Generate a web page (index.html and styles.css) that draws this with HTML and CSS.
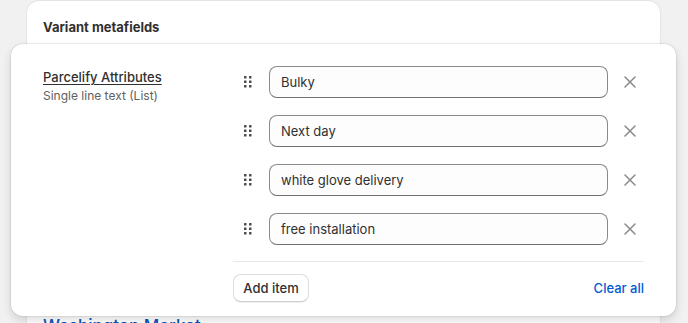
FILE: index.html
```html
<!DOCTYPE html>
<html lang="en">
<head>
  <meta charset="UTF-8">
  <title>Variant metafields</title>
  <link rel="stylesheet" href="styles.css">
</head>
<body>
  <div class="card">
    <h2 class="card-title">Variant metafields</h2>
    <div class="card-body">
      <h3 class="product-name">Washington Market</h3>
    </div>
  </div>

  <div class="popover">
    <div class="field">
      <div class="field-label">
        <a class="field-name">Parcelify Attributes</a>
        <span class="field-type">Single line text (List)</span>
      </div>
      <div class="field-list">
        <div class="item">
          <span class="handle">
            <svg width="8" height="12" viewBox="0 0 8 12"><g fill="#4a4a4a"><rect x="0" y="0" width="2.5" height="2.5" rx=".5"/><rect x="5" y="0" width="2.5" height="2.5" rx=".5"/><rect x="0" y="4.5" width="2.5" height="2.5" rx=".5"/><rect x="5" y="4.5" width="2.5" height="2.5" rx=".5"/><rect x="0" y="9" width="2.5" height="2.5" rx=".5"/><rect x="5" y="9" width="2.5" height="2.5" rx=".5"/></g></svg>
          </span>
          <input class="text-input" type="text" value="Bulky">
          <button class="remove" type="button"><svg width="12" height="12" viewBox="0 0 12 12"><path d="M1 1L11 11M11 1L1 11" stroke="#8a8a8a" stroke-width="1.5" stroke-linecap="round"/></svg></button>
        </div>
        <div class="item">
          <span class="handle">
            <svg width="8" height="12" viewBox="0 0 8 12"><g fill="#4a4a4a"><rect x="0" y="0" width="2.5" height="2.5" rx=".5"/><rect x="5" y="0" width="2.5" height="2.5" rx=".5"/><rect x="0" y="4.5" width="2.5" height="2.5" rx=".5"/><rect x="5" y="4.5" width="2.5" height="2.5" rx=".5"/><rect x="0" y="9" width="2.5" height="2.5" rx=".5"/><rect x="5" y="9" width="2.5" height="2.5" rx=".5"/></g></svg>
          </span>
          <input class="text-input" type="text" value="Next day">
          <button class="remove" type="button"><svg width="12" height="12" viewBox="0 0 12 12"><path d="M1 1L11 11M11 1L1 11" stroke="#8a8a8a" stroke-width="1.5" stroke-linecap="round"/></svg></button>
        </div>
        <div class="item">
          <span class="handle">
            <svg width="8" height="12" viewBox="0 0 8 12"><g fill="#4a4a4a"><rect x="0" y="0" width="2.5" height="2.5" rx=".5"/><rect x="5" y="0" width="2.5" height="2.5" rx=".5"/><rect x="0" y="4.5" width="2.5" height="2.5" rx=".5"/><rect x="5" y="4.5" width="2.5" height="2.5" rx=".5"/><rect x="0" y="9" width="2.5" height="2.5" rx=".5"/><rect x="5" y="9" width="2.5" height="2.5" rx=".5"/></g></svg>
          </span>
          <input class="text-input" type="text" value="white glove delivery">
          <button class="remove" type="button"><svg width="12" height="12" viewBox="0 0 12 12"><path d="M1 1L11 11M11 1L1 11" stroke="#8a8a8a" stroke-width="1.5" stroke-linecap="round"/></svg></button>
        </div>
        <div class="item">
          <span class="handle">
            <svg width="8" height="12" viewBox="0 0 8 12"><g fill="#4a4a4a"><rect x="0" y="0" width="2.5" height="2.5" rx=".5"/><rect x="5" y="0" width="2.5" height="2.5" rx=".5"/><rect x="0" y="4.5" width="2.5" height="2.5" rx=".5"/><rect x="5" y="4.5" width="2.5" height="2.5" rx=".5"/><rect x="0" y="9" width="2.5" height="2.5" rx=".5"/><rect x="5" y="9" width="2.5" height="2.5" rx=".5"/></g></svg>
          </span>
          <input class="text-input" type="text" value="free installation">
          <button class="remove" type="button"><svg width="12" height="12" viewBox="0 0 12 12"><path d="M1 1L11 11M11 1L1 11" stroke="#8a8a8a" stroke-width="1.5" stroke-linecap="round"/></svg></button>
        </div>
        <div class="list-footer">
          <button class="add-btn" type="button">Add item</button>
          <a class="clear-link">Clear all</a>
        </div>
      </div>
    </div>
  </div>
</body>
</html>
```

FILE: styles.css
```css
html, body { height: 323px; overflow: hidden; }
body { margin: 0; background: #f1f1f1; font-family: Inter, "Noto Sans", sans-serif; font-size: 13px; color: #303030; }

.card { margin: 1px 0 0 27px; width: 633px; height: 400px; background: #fff; border-radius: 12px; box-shadow: 0 1px 0 rgba(0,0,0,.07), 0 0 0 1px rgba(0,0,0,.05); }
.card-title { margin: 0; padding: 16px 16px 0; font-size: 13px; line-height: 20px; font-weight: 650; color: #303030; }
.card-body { padding: 279px 16px 0; }
.product-name { margin: 0; font-size: 17px; line-height: 20px; font-weight: 500; color: #0b55b8; }

.popover { position: absolute; left: 11px; top: 44px; width: 601px; padding: 22px 32px 14px; background: #fff; border-radius: 12px; box-shadow: 0 4px 10px rgba(0,0,0,.14), 0 0 0 1px rgba(0,0,0,.06); }
.field { display: flex; }
.field-label { width: 190px; padding-top: 1px; display: flex; flex-direction: column; }
.field-name { color: #303030; font-weight: 500; line-height: 20px; text-decoration: underline; text-underline-offset: 2px; align-self: flex-start; }
.field-type { color: #616161; font-size: 12px; line-height: 18px; }

.field-list { flex: 1; display: flex; flex-direction: column; gap: 17px; }
.item { display: grid; grid-template-columns: 28px 1fr 28px; gap: 8px; align-items: center; }
.handle { display: flex; justify-content: center; align-items: center; padding-left: 1px; }
.text-input { height: 32px; box-sizing: border-box; padding: 0 11px; border: 1px solid #8a8a8a; border-bottom-color: #707070; border-radius: 8px; background: #fdfdfd; font: inherit; color: #303030; }
.remove { border: none; background: none; padding: 0; height: 28px; display: flex; align-items: center; justify-content: center; }

.list-footer { margin-top: -1px; padding-top: 12px; border-top: 1px solid #e8e8e8; display: flex; justify-content: space-between; align-items: center; }
.add-btn { height: 28px; width: 76px; border: 1px solid #dedede; border-bottom-color: #cfcfcf; border-radius: 8px; background: #fff; font: inherit; font-weight: 550; color: #303030; box-shadow: 0 1px 0 rgba(0,0,0,.06); }
.clear-link { color: #005bd3; font-weight: 500; }
```
